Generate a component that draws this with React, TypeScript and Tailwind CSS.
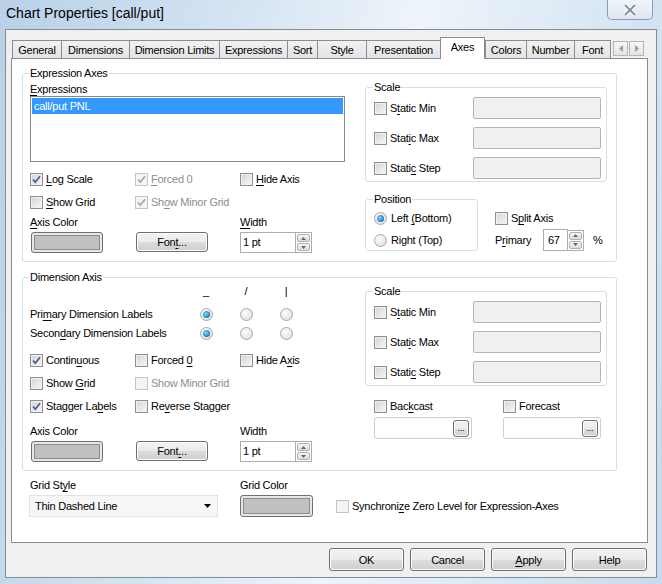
import clsx from 'clsx'
import type { ReactNode } from 'react'

const btn =
  'border border-[#707070] rounded-[3px] bg-[linear-gradient(#f2f2f2_0%,#ebebeb_50%,#dddddd_51%,#cfcfcf_100%)] shadow-[inset_0_0_0_1px_#fbfbfb]'

const legend = '-ml-px px-px'

function U({ children }: { children: ReactNode }) {
  return <span className="underline underline-offset-[2px] decoration-[1px]">{children}</span>
}

function Check({ checked, disabled, label }: { checked?: boolean; disabled?: boolean; label: ReactNode }) {
  return (
    <div className="flex items-center h-[20px] gap-[3px] whitespace-nowrap">
      <span
        className={clsx(
          'w-[13px] h-[13px] border flex items-center justify-center shrink-0',
          disabled
            ? 'border-[#c5c5c5] bg-[#f4f4f4]'
            : 'border-[#8e8f8f] bg-[linear-gradient(135deg,#d4d4d4,#f7f7f7)] shadow-[inset_0_0_0_1px_#f0f0f0]'
        )}
      >
        {checked && (
          <svg width="11" height="11" viewBox="0 0 11 11">
            <path
              d="M2 5.5 L4.3 8.2 L9 2.2"
              fill="none"
              stroke={disabled ? '#a9a9a9' : '#4a5f8f'}
              strokeWidth="1.8"
            />
          </svg>
        )}
      </span>
      <span className={disabled ? 'text-[#8d8d8d]' : ''}>{label}</span>
    </div>
  )
}

function Radio({ on, label }: { on?: boolean; label?: ReactNode }) {
  return (
    <div className="flex items-center h-[20px] gap-[4px] whitespace-nowrap">
      <span className="w-[13px] h-[13px] rounded-full border border-[#a8a8a8] bg-[radial-gradient(circle_at_35%_35%,#fdfdfd,#dadada)] flex items-center justify-center shrink-0">
        {on && (
          <span className="w-[7px] h-[7px] rounded-full bg-[radial-gradient(circle_at_40%_40%,#7fdcff,#2b86c4_60%,#144d7e)]" />
        )}
      </span>
      {label && <span>{label}</span>}
    </div>
  )
}

function Spin() {
  return (
    <div className="w-[16px] h-[21px] flex flex-col gap-px border border-l-0 border-[#abadb3] bg-white p-px">
      <div className="flex-1 border border-[#b0b0b0] rounded-[2px] bg-[linear-gradient(#f6f6f6,#dcdcdc)] flex items-center justify-center">
        <svg width="5" height="3" viewBox="0 0 5 3">
          <path d="M0 3 L2.5 0 L5 3Z" fill="#4e6b90" />
        </svg>
      </div>
      <div className="flex-1 border border-[#b0b0b0] rounded-[2px] bg-[linear-gradient(#f6f6f6,#dcdcdc)] flex items-center justify-center">
        <svg width="5" height="3" viewBox="0 0 5 3">
          <path d="M0 0 L2.5 3 L5 0Z" fill="#4e6b90" />
        </svg>
      </div>
    </div>
  )
}

function ColorBtn() {
  return (
    <div className="w-[72px] h-[21px] rounded-[3px] border border-[#707070] bg-[#e6e6e6] p-[2px]">
      <div className="w-full h-full bg-[#c0c0c0] border border-[#8c8c8c]" />
    </div>
  )
}

function WidthBox() {
  return (
    <div className="flex">
      <div className="w-[56px] h-[21px] border border-[#abadb3] bg-white pl-[2px] pt-[2px]">1 pt</div>
      <Spin />
    </div>
  )
}

function ScaleGroup() {
  const rows: ReactNode[] = [
    <>S<U>t</U>atic Min</>,
    <>Stat<U>i</U>c Max</>,
    <>Stati<U>c</U> Step</>,
  ]
  return (
    <fieldset className="w-[242px] border border-[#d5dfe5] rounded-[3px] pl-[8px] pr-[5px] pb-[2px]">
      <legend className={legend}>Scale</legend>
      <div className="flex flex-col gap-[8px] mt-[3px]">
        {rows.map((r, i) => (
          <div key={i} className="flex items-center h-[22px]">
            <div className="flex-1">
              <Check label={r} />
            </div>
            <div className="w-[128px] h-[22px] border border-[#b5b5b5] rounded-[2px] bg-[#f0f0f0]" />
          </div>
        ))}
      </div>
    </fieldset>
  )
}

const tabs = [
  ['General', 49],
  ['Dimensions', 68],
  ['Dimension Limits', 90],
  ['Expressions', 68],
  ['Sort', 30],
  ['Style', 49],
  ['Presentation', 74],
  ['Axes', 45],
  ['Colors', 41],
  ['Number', 48],
  ['Font', 37],
] as const

export default function App() {
  return (
    <div className="w-[662px] h-[584px] overflow-hidden flex flex-col bg-[linear-gradient(100deg,#b9d0e8_0%,#d3e3f2_30%,#eef4fa_55%,#dae8f4_78%,#c6dbee_100%)] font-['Liberation_Sans',Arial,sans-serif] text-[11px] leading-[14px] tracking-[-0.25px] text-black">
      {/* Title bar */}
      <div className="h-[29px] flex items-start">
        <span className="ml-[6px] mt-[5px] text-[14px] leading-[16px] tracking-normal">Chart Properties [call/put]</span>
        <div className="ml-auto mr-[9px] w-[46px] h-[20px] border border-t-0 border-[#8b9bb0] rounded-b-[5px] bg-[linear-gradient(#f1f5fa,#dde7f1)] flex items-center justify-center">
          <svg width="14" height="12" viewBox="0 0 14 12">
            <path d="M2 1 L12 11 M12 1 L2 11" stroke="#fff" strokeWidth="4" />
            <path d="M2 1 L12 11 M12 1 L2 11" stroke="#8593a6" strokeWidth="2" />
          </svg>
        </div>
      </div>

      {/* Client area */}
      <div className="mx-[5px] h-[549px] border border-[#838b94] bg-[#f0f0f0] flex flex-col">
        {/* Tabs */}
        <div className="mt-[7px] ml-[6px] h-[21px] flex items-end">
          {tabs.map(([name, w]) => {
            const sel = name === 'Axes'
            return (
              <div
                key={name}
                style={{ width: w }}
                className={clsx(
                  'border-t border-l border-[#898c95] flex items-center justify-center whitespace-nowrap',
                  name === 'Font' && 'border-r',
                  sel
                    ? 'h-[22px] -mb-px bg-white relative z-10 border-r pb-[3px]'
                    : 'h-[18px] bg-[linear-gradient(#f2f2f2,#e3e3e3)]'
                )}
              >
                {name}
              </div>
            )
          })}
          <div className="ml-[2px] mb-[2px] flex gap-px">
            {['M4 0 L0 3.5 L4 7Z', 'M0 0 L4 3.5 L0 7Z'].map((d) => (
              <div key={d} className="w-[15px] h-[15px] border border-[#b4b4b4] bg-[linear-gradient(#f6f6f6,#e4e4e4)] flex items-center justify-center">
                <svg width="4" height="7" viewBox="0 0 4 7">
                  <path d={d} fill="#9a9a9a" />
                </svg>
              </div>
            ))}
          </div>
        </div>

        {/* Tab panel */}
        <div className="ml-[5px] w-[637px] h-[485px] border border-[#898c95] bg-white flex flex-col">
          {/* Expression Axes */}
          <fieldset className="ml-[10px] mt-[7px] w-[595px] border border-[#d5dfe5] rounded-[3px] pl-[7px] pr-[9px] pb-[8px]">
            <legend className={legend}>Expression Axes</legend>
            <div className="flex">
              <div className="w-[335px] flex flex-col">
                <div className="mt-[2px]">
                  <U>E</U>xpressions
                </div>
                <div className="w-[315px] h-[66px] border border-[#828790] bg-white p-px">
                  <div className="h-[16px] leading-[16px] bg-[#3399ff] text-white pl-[2px]">call/put PNL</div>
                </div>
                <div className="mt-[7px] grid grid-cols-[105px_105px_105px] gap-y-[3px]">
                  <Check checked label={<><U>L</U>og Scale</>} />
                  <Check checked disabled label={<><U>F</U>orced 0</>} />
                  <Check label={<><U>H</U>ide Axis</>} />
                  <Check label={<><U>S</U>how Grid</>} />
                  <Check checked disabled label={<>Sh<U>o</U>w Minor Grid</>} />
                  <div />
                </div>
                <div className="mt-[3px] grid grid-cols-[105px_105px_105px]">
                  <div>
                    <U>A</U>xis Color
                  </div>
                  <div />
                  <div>
                    <U>W</U>idth
                  </div>
                </div>
                <div className="mt-[3px] grid grid-cols-[105px_105px_105px] items-start">
                  <div className="ml-px">
                    <ColorBtn />
                  </div>
                  <div className={clsx(btn, 'ml-px w-[72px] h-[20px] flex items-center justify-center')}>
                    Fon<U>t</U>...
                  </div>
                  <WidthBox />
                </div>
              </div>

              <div className="w-[242px] flex flex-col">
                <ScaleGroup />
                <div className="mt-[10px] flex">
                  <fieldset className="w-[113px] border border-[#d5dfe5] rounded-[3px] pl-[8px]">
                    <legend className={legend}>Position</legend>
                    <div className="mt-[2px] flex flex-col gap-[2px]">
                      <Radio on label={<>Left <U>(</U>Bottom)</>} />
                      <Radio label={<>Right (Top)</>} />
                    </div>
                  </fieldset>
                  <div className="ml-[17px] mt-[16px] flex flex-col gap-px">
                    <Check label={<>S<U>p</U>lit Axis</>} />
                    <div className="flex items-center h-[22px]">
                      <span className="w-[48px]">
                        P<U>r</U>imary
                      </span>
                      <div className="w-[25px] h-[22px] border border-[#abadb3] bg-white pl-[4px] pt-[3px]">67</div>
                      <Spin />
                      <span className="ml-[9px]">%</span>
                    </div>
                  </div>
                </div>
              </div>
            </div>
          </fieldset>

          {/* Dimension Axis */}
          <fieldset className="ml-[10px] mt-[8px] w-[595px] border border-[#d5dfe5] rounded-[3px] pl-[7px] pr-[9px] pb-[8px]">
            <legend className={legend}>Dimension Axis</legend>
            <div className="flex">
              <div className="w-[335px] flex flex-col">
                <div className="grid grid-cols-[156px_40px_40px_40px] h-[14px]">
                  <div />
                  <div className="text-center">_</div>
                  <div className="text-center">/</div>
                  <div className="text-center">|</div>
                </div>
                <div className="mt-[7px] grid grid-cols-[156px_40px_40px_40px] grid-rows-[18px_18px] gap-y-px items-center">
                  <div>
                    Pri<U>m</U>ary Dimension Labels
                  </div>
                  <div className="flex justify-center"><Radio on /></div>
                  <div className="flex justify-center"><Radio /></div>
                  <div className="flex justify-center"><Radio /></div>
                  <div>
                    Secon<U>d</U>ary Dimension Labels
                  </div>
                  <div className="flex justify-center"><Radio on /></div>
                  <div className="flex justify-center"><Radio /></div>
                  <div className="flex justify-center"><Radio /></div>
                </div>
                <div className="mt-[8px] grid grid-cols-[105px_105px_105px] gap-y-[3px]">
                  <Check checked label={<>Contin<U>u</U>ous</>} />
                  <Check label={<>Forced <U>0</U></>} />
                  <Check label={<>Hide A<U>x</U>is</>} />
                  <Check label={<>Show <U>G</U>rid</>} />
                  <Check disabled label="Show Minor Grid" />
                  <div />
                  <Check checked label={<>Stagger La<U>b</U>els</>} />
                  <Check label={<>Re<U>v</U>erse Stagger</>} />
                  <div />
                </div>
                <div className="mt-[8px] grid grid-cols-[105px_105px_105px]">
                  <div>Axis Color</div>
                  <div />
                  <div>Width</div>
                </div>
                <div className="mt-[3px] grid grid-cols-[105px_105px_105px] items-start">
                  <div className="ml-px">
                    <ColorBtn />
                  </div>
                  <div className={clsx(btn, 'ml-px w-[72px] h-[20px] flex items-center justify-center')}>
                    Font<U>.</U>..
                  </div>
                  <WidthBox />
                </div>
              </div>

              <div className="w-[242px] flex flex-col">
                <ScaleGroup />
                <div className="mt-[10px] ml-[9px] grid grid-cols-[129px_98px]">
                  <Check label={<>Bac<U>k</U>cast</>} />
                  <Check label="Forecast" />
                  {[0, 1].map((i) => (
                    <div key={i} className="mt-px w-[98px] h-[22px] border border-[#cfcfcf] rounded-[2px] bg-white flex items-center justify-end pr-[2px]">
                      <div className={clsx(btn, 'w-[16px] h-[17px] flex items-end justify-center pb-[3px] text-[9px] leading-[9px]')}>...</div>
                    </div>
                  ))}
                </div>
              </div>
            </div>
          </fieldset>

          {/* Grid style */}
          <div className="ml-[18px] mt-[7px] grid grid-cols-[210px_96px_1fr]">
            <div>
              Grid St<U>y</U>le
            </div>
            <div>Grid Color</div>
            <div />
            <div className="-ml-px mt-[3px] w-[189px] h-[22px] border border-[#e3e3e3] bg-[#f7f7f7] flex items-center pl-[5px] pr-[6px]">
              <span className="flex-1">Thin Dashed Line</span>
              <svg width="7" height="4" viewBox="0 0 7 4">
                <path d="M0 0 L7 0 L3.5 4Z" fill="#000" />
              </svg>
            </div>
            <div className="mt-[3px] w-[73px] h-[22px] rounded-[3px] border border-[#707070] bg-[#e6e6e6] p-[2px]">
              <div className="w-full h-full bg-[#c0c0c0] border border-[#8c8c8c]" />
            </div>
            <div className="mt-[4px]">
              <Check disabled label={<span className="text-black">Synchroni<U>z</U>e Zero Level for Expression-Axes</span>} />
            </div>
          </div>
        </div>

        {/* Buttons */}
        <div className="mt-[5px] pr-[9px] flex justify-end gap-[6px]">
          {[<>OK</>, <>Cancel</>, <><U>A</U>pply</>, <>Help</>].map((t, i) => (
            <div key={i} className={clsx(btn, 'w-[75px] h-[23px] flex items-center justify-center')}>
              {t}
            </div>
          ))}
        </div>
      </div>
    </div>
  )
}
